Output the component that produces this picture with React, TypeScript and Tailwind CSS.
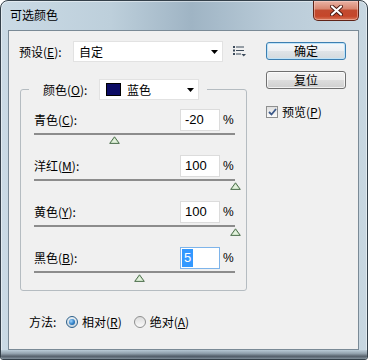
import React from 'react';

const U = ({ c }: { c: string }) => (
  <span className="underline decoration-1 underline-offset-[1px]">{c}</span>
);

function Arrow() {
  return (
    <svg width="7" height="4" viewBox="0 0 7 4">
      <path d="M0 0H7L3.5 4Z" fill="#000" />
    </svg>
  );
}

function Thumb() {
  return (
    <svg width="11" height="8" viewBox="0 0 11 8">
      <path d="M5.5 0.8 L10.3 7.4 H0.7 Z" fill="#c4dfbc" stroke="#4f6f4f" strokeWidth="1" strokeLinejoin="round" />
      <path d="M5.5 2.6 L8.4 6.5 H2.6 Z" fill="#e4f1df" />
    </svg>
  );
}

function MenuIcon() {
  return (
    <svg width="13" height="11" viewBox="0 0 13 11">
      <rect x="0" y="0" width="2" height="2" fill="#3b4a5a" />
      <rect x="0" y="3.5" width="2" height="2" fill="#3b4a5a" />
      <rect x="0" y="7" width="2" height="2" fill="#3b4a5a" />
      <rect x="3" y="0.5" width="8" height="1" fill="#3b4a5a" />
      <rect x="3" y="4" width="8" height="1" fill="#3b4a5a" />
      <rect x="3" y="7.5" width="5" height="1" fill="#3b4a5a" />
      <path d="M8.5 8 H13 L10.75 10.5 Z" fill="#3b4a5a" />
    </svg>
  );
}

type Row = { label: string; k: string; value: number; focused?: boolean };

const rows: Row[] = [
  { label: '青色', k: 'C', value: -20 },
  { label: '洋红', k: 'M', value: 100 },
  { label: '黄色', k: 'Y', value: 100 },
  { label: '黑色', k: 'B', value: 5, focused: true },
];

function SliderRow({ label, k, value, focused }: Row) {
  const pos = ((value + 100) / 200) * 201;
  return (
    <div className="flex flex-col">
      <div className="flex items-center h-[22px]">
        <span className="flex-1 text-[12px] leading-[16px]">
          {label}(<U c={k} />):
        </span>
        {focused ? (
          <div className="w-[40px] h-[22px] bg-white border border-[#7eb4ea] flex items-center pl-[1px]">
            <span className="h-[18px] px-[2px] bg-[#3399ff] text-white font-['Liberation_Sans',sans-serif] text-[13px] leading-[18px]">
              {value}
            </span>
          </div>
        ) : (
          <div className="w-[40px] h-[22px] bg-white border border-[#dcdcdc] flex items-center pl-[4px] font-['Liberation_Sans',sans-serif] text-[13px] leading-[18px]">
            {value}
          </div>
        )}
        <span className="w-[15px] pl-[3px] text-[12px] leading-[16px] font-['Liberation_Sans',sans-serif]">%</span>
      </div>
      <div className="relative mt-[2px] h-[2px] bg-[#8c8c8c]">
        <div className="absolute top-[3px] flex" style={{ left: pos - 5.5 }}>
          <Thumb />
        </div>
      </div>
    </div>
  );
}

export default function App() {
  return (
    <div className="w-[368px] h-[360px] rounded-t-[8px] rounded-b-[3px] border border-[#34404a] flex flex-col overflow-hidden bg-[linear-gradient(90deg,#cadae5_0%,#bdcfdb_30%,#9fb4c4_52%,#b9cbd8_75%,#c8d7e1_100%)] shadow-[inset_0_0_0_1px_rgba(255,255,255,0.45)] font-['Noto_Sans_CJK_SC',sans-serif] text-black">
      {/* title bar */}
      <div className="h-[29px] flex items-start shrink-0">
        <span className="ml-[9px] mt-[6px] text-[12px] leading-[16px] text-black">可选颜色</span>
        <div className="ml-auto mr-[8px] w-[46px] h-[20px] rounded-b-[5px] border border-t-0 border-[#5f2317] bg-[linear-gradient(#eab3a5_0%,#d98872_40%,#c24a2f_50%,#c5462a_80%,#d9785a_100%)] shadow-[inset_0_0_0_1px_rgba(255,220,210,0.45)] flex items-center justify-center">
          <svg width="13" height="11" viewBox="0 0 13 11">
            <path d="M2 1.5 L11 9.5 M11 1.5 L2 9.5" stroke="#4a1a12" strokeWidth="4" strokeLinecap="round" />
            <path d="M2 1.5 L11 9.5 M11 1.5 L2 9.5" stroke="#ffffff" strokeWidth="2.2" strokeLinecap="round" />
          </svg>
        </div>
      </div>

      {/* client area */}
      <div className="ml-[7px] w-[351px] h-[320px] shrink-0 border border-[#7a8a96] bg-[#f0f0f0] flex">
        {/* left column */}
        <div className="w-[257px] pl-[10px] pt-[10px] flex flex-col">
          {/* preset row */}
          <div className="h-[21px] flex items-center">
            <span className="w-[54px] text-[12px] leading-[16px]">
              预设(<U c="E" />):
            </span>
            <div className="w-[150px] h-[21px] bg-white border border-[#e2e2e2] flex items-center pl-[5px] pr-[4px]">
              <span className="flex-1 text-[12px] leading-[16px]">自定</span>
              <Arrow />
            </div>
            <div className="ml-[10px] flex">
              <MenuIcon />
            </div>
          </div>

          {/* group box */}
          <fieldset className="ml-[1px] mt-[17px] w-[227px] border border-[#b5bcc1] rounded-[3px] pl-[13px] pr-[11px] pt-[9px] pb-[17px]">
            <legend className="ml-[-5px] pl-[14px] pr-[8px]">
              <div className="flex items-center h-[21px]">
                <span className="w-[56px] text-[12px] leading-[16px]">
                  颜色(<U c="O" />):
                </span>
                <div className="w-[100px] h-[21px] bg-white border border-[#e2e2e2] flex items-center pl-[6px] pr-[4px]">
                  <span className="w-[15px] h-[13px] bg-[#0b0b64] border border-black" />
                  <span className="ml-[6px] flex-1 text-[12px] leading-[16px]">蓝色</span>
                  <Arrow />
                </div>
              </div>
            </legend>
            <div className="flex flex-col gap-[20px]">
              {rows.map((r) => (
                <SliderRow key={r.k} {...r} />
              ))}
            </div>
          </fieldset>

          {/* method row */}
          <div className="mt-[23px] ml-[10px] h-[16px] flex items-center text-[12px] leading-[16px]">
            <span className="w-[37px]">方法:</span>
            <span className="w-[12px] h-[12px] rounded-full border border-[#2c5f8a] bg-[linear-gradient(#e8eef3,#c9d6e0)] flex items-center justify-center">
              <span className="w-[6px] h-[6px] rounded-full bg-[radial-gradient(circle_at_35%_35%,#9fd4ff_0%,#2e7fc6_55%,#1b4f86_100%)]" />
            </span>
            <span className="ml-[4px]">
              相对(<U c="R" />)
            </span>
            <span className="ml-[12px] w-[12px] h-[12px] rounded-full border border-[#8e8f8f] bg-[linear-gradient(#dcdcdc,#fafafa)]" />
            <span className="ml-[4px]">
              绝对(<U c="A" />)
            </span>
          </div>
        </div>

        {/* right column */}
        <div className="flex flex-col pt-[11px]">
          <div className="w-[80px] h-[18px] rounded-[3px] border border-[#3c7fb1] bg-[linear-gradient(#f4f8fb_0%,#eceff2_50%,#dfe4e8_50%,#d3dade_100%)] shadow-[inset_0_0_0_1px_#bfe3f8] flex items-center justify-center text-[12px] leading-[16px]">
            确定
          </div>
          <div className="mt-[11px] w-[80px] h-[18px] rounded-[3px] border border-[#707070] bg-[linear-gradient(#f2f2f2_0%,#ebebeb_50%,#dddddd_50%,#cfcfcf_100%)] shadow-[inset_0_0_0_1px_rgba(255,255,255,0.7)] flex items-center justify-center text-[12px] leading-[16px]">
            复位
          </div>
          <div className="mt-[16px] flex items-center h-[13px]">
            <span className="w-[12px] h-[12px] border border-[#8e8f8f] bg-[linear-gradient(#e0e0e0,#fbfbfb)] flex items-center justify-center">
              <svg width="9" height="8" viewBox="0 0 9 8">
                <path d="M1 4 L3.5 6.5 L8 1" stroke="#3d5a8a" strokeWidth="1.8" fill="none" />
              </svg>
            </span>
            <span className="ml-[4px] text-[12px] leading-[16px]">
              预览(<U c="P" />)
            </span>
          </div>
        </div>
      </div>

      {/* bottom frame */}
      <div className="flex-1 bg-[linear-gradient(#b9cad6_0%,#8594a0_40%,#3c4550_70%,#6b7a86_100%)] opacity-80" />
    </div>
  );
}
